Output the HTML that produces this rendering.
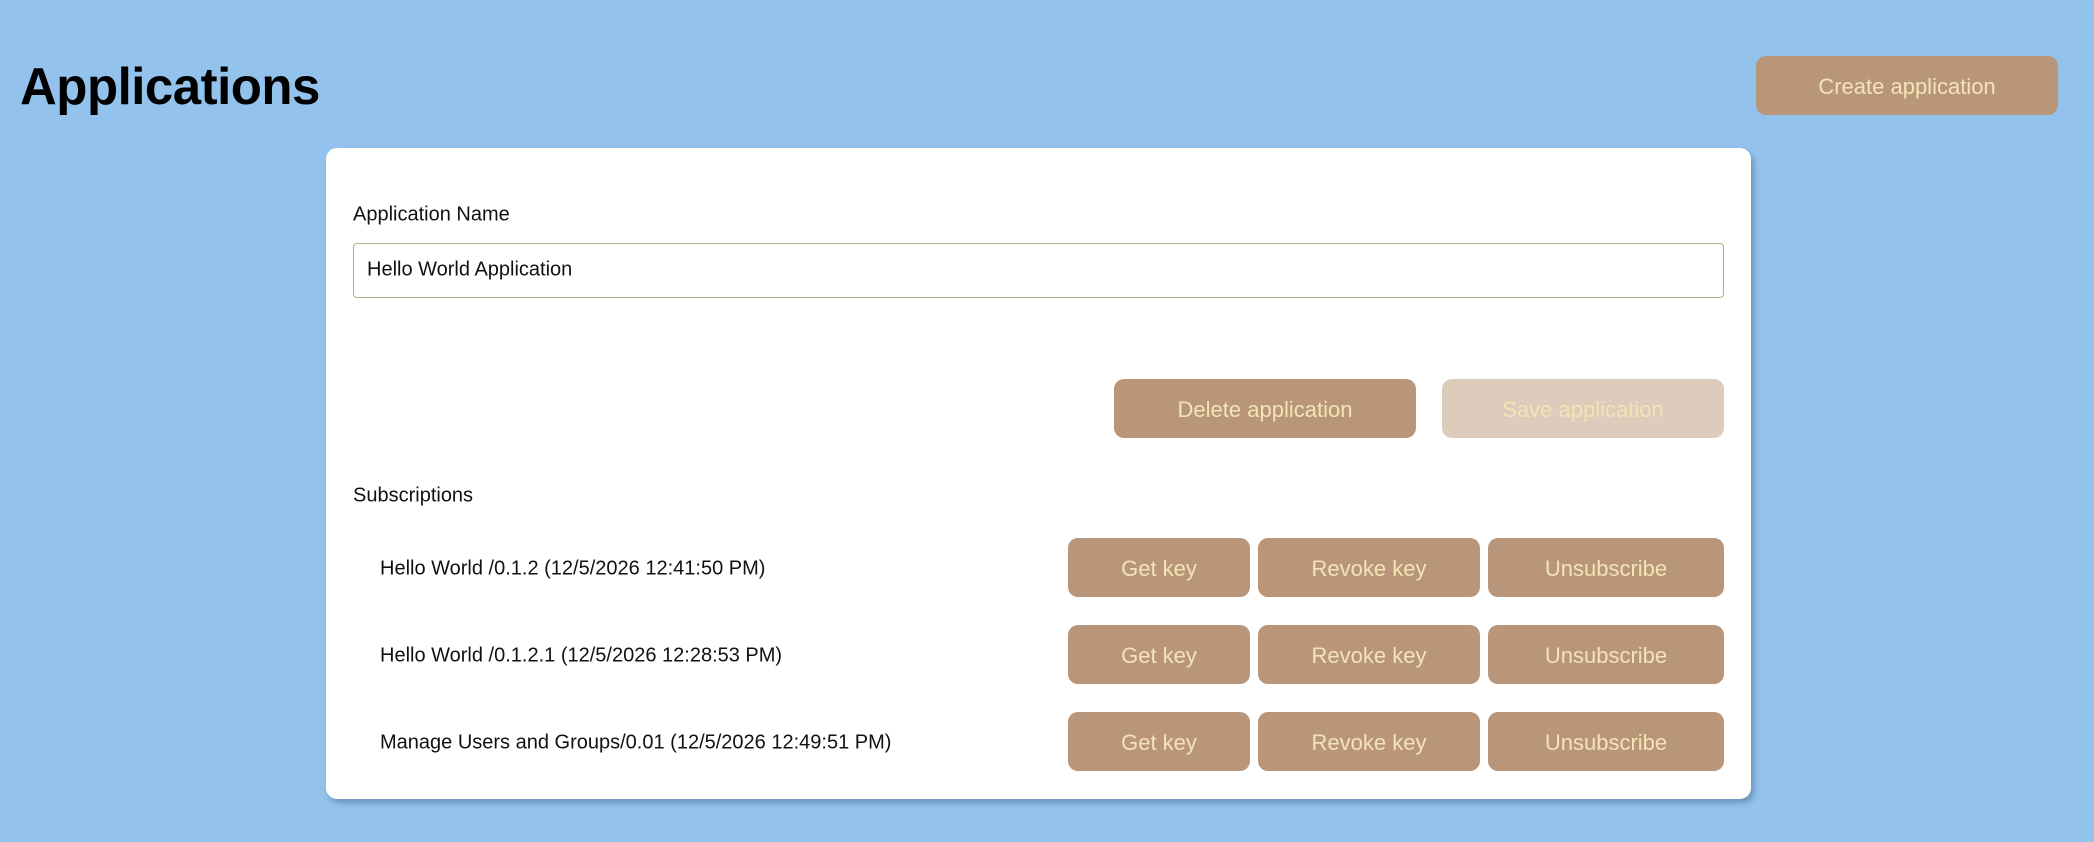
<!DOCTYPE html>
<html><head><meta charset="utf-8"><style>
*{box-sizing:border-box;margin:0;padding:0}
body{width:2094px;height:842px;background:#93c3ec;font-family:"Liberation Sans",sans-serif;position:relative;overflow:hidden;color:#111}
h1{position:absolute;left:20px;top:57px;font-size:52px;font-weight:bold;letter-spacing:-0.5px;color:#000;transform:scaleX(0.98);transform-origin:left}
.btn{position:absolute;background:#b9967a;color:#f3e4b6;border-radius:10px;display:flex;align-items:center;justify-content:center;font-size:22px;padding-top:2px}
.dis{background:#ddcbbb}
.card{position:absolute;left:326px;top:148px;width:1425px;height:651px;background:#fff;border-radius:11px;box-shadow:3px 4px 6px rgba(60,90,130,.45)}
.t{position:absolute;font-size:20px;transform:translateY(-50%);white-space:nowrap}
.input{position:absolute;left:353px;top:243px;width:1371px;height:55px;border:1.5px solid #b8ab90;border-radius:4px}
</style></head><body>
<h1>Applications</h1>
<div class="btn" style="left:1756px;top:56px;width:302px;height:59px">Create application</div>
<div class="card"></div>
<div class="t" style="left:353px;top:215px">Application Name</div>
<div class="input"></div>
<div class="t" style="left:367px;top:270px">Hello World Application</div>
<div class="btn" style="left:1114px;top:379px;width:302px;height:59px">Delete application</div>
<div class="btn dis" style="left:1442px;top:379px;width:282px;height:59px">Save application</div>
<div class="t" style="left:353px;top:496px">Subscriptions</div>

<div class="t" style="left:380px;top:569px">Hello World /0.1.2 (12/5/2026 12:41:50 PM)</div>
<div class="btn" style="left:1068px;top:538px;width:182px;height:59px">Get key</div>
<div class="btn" style="left:1258px;top:538px;width:222px;height:59px">Revoke key</div>
<div class="btn" style="left:1488px;top:538px;width:236px;height:59px">Unsubscribe</div>

<div class="t" style="left:380px;top:656px">Hello World /0.1.2.1 (12/5/2026 12:28:53 PM)</div>
<div class="btn" style="left:1068px;top:625px;width:182px;height:59px">Get key</div>
<div class="btn" style="left:1258px;top:625px;width:222px;height:59px">Revoke key</div>
<div class="btn" style="left:1488px;top:625px;width:236px;height:59px">Unsubscribe</div>

<div class="t" style="left:380px;top:743px">Manage Users and Groups/0.01 (12/5/2026 12:49:51 PM)</div>
<div class="btn" style="left:1068px;top:712px;width:182px;height:59px">Get key</div>
<div class="btn" style="left:1258px;top:712px;width:222px;height:59px">Revoke key</div>
<div class="btn" style="left:1488px;top:712px;width:236px;height:59px">Unsubscribe</div>
</body></html>
